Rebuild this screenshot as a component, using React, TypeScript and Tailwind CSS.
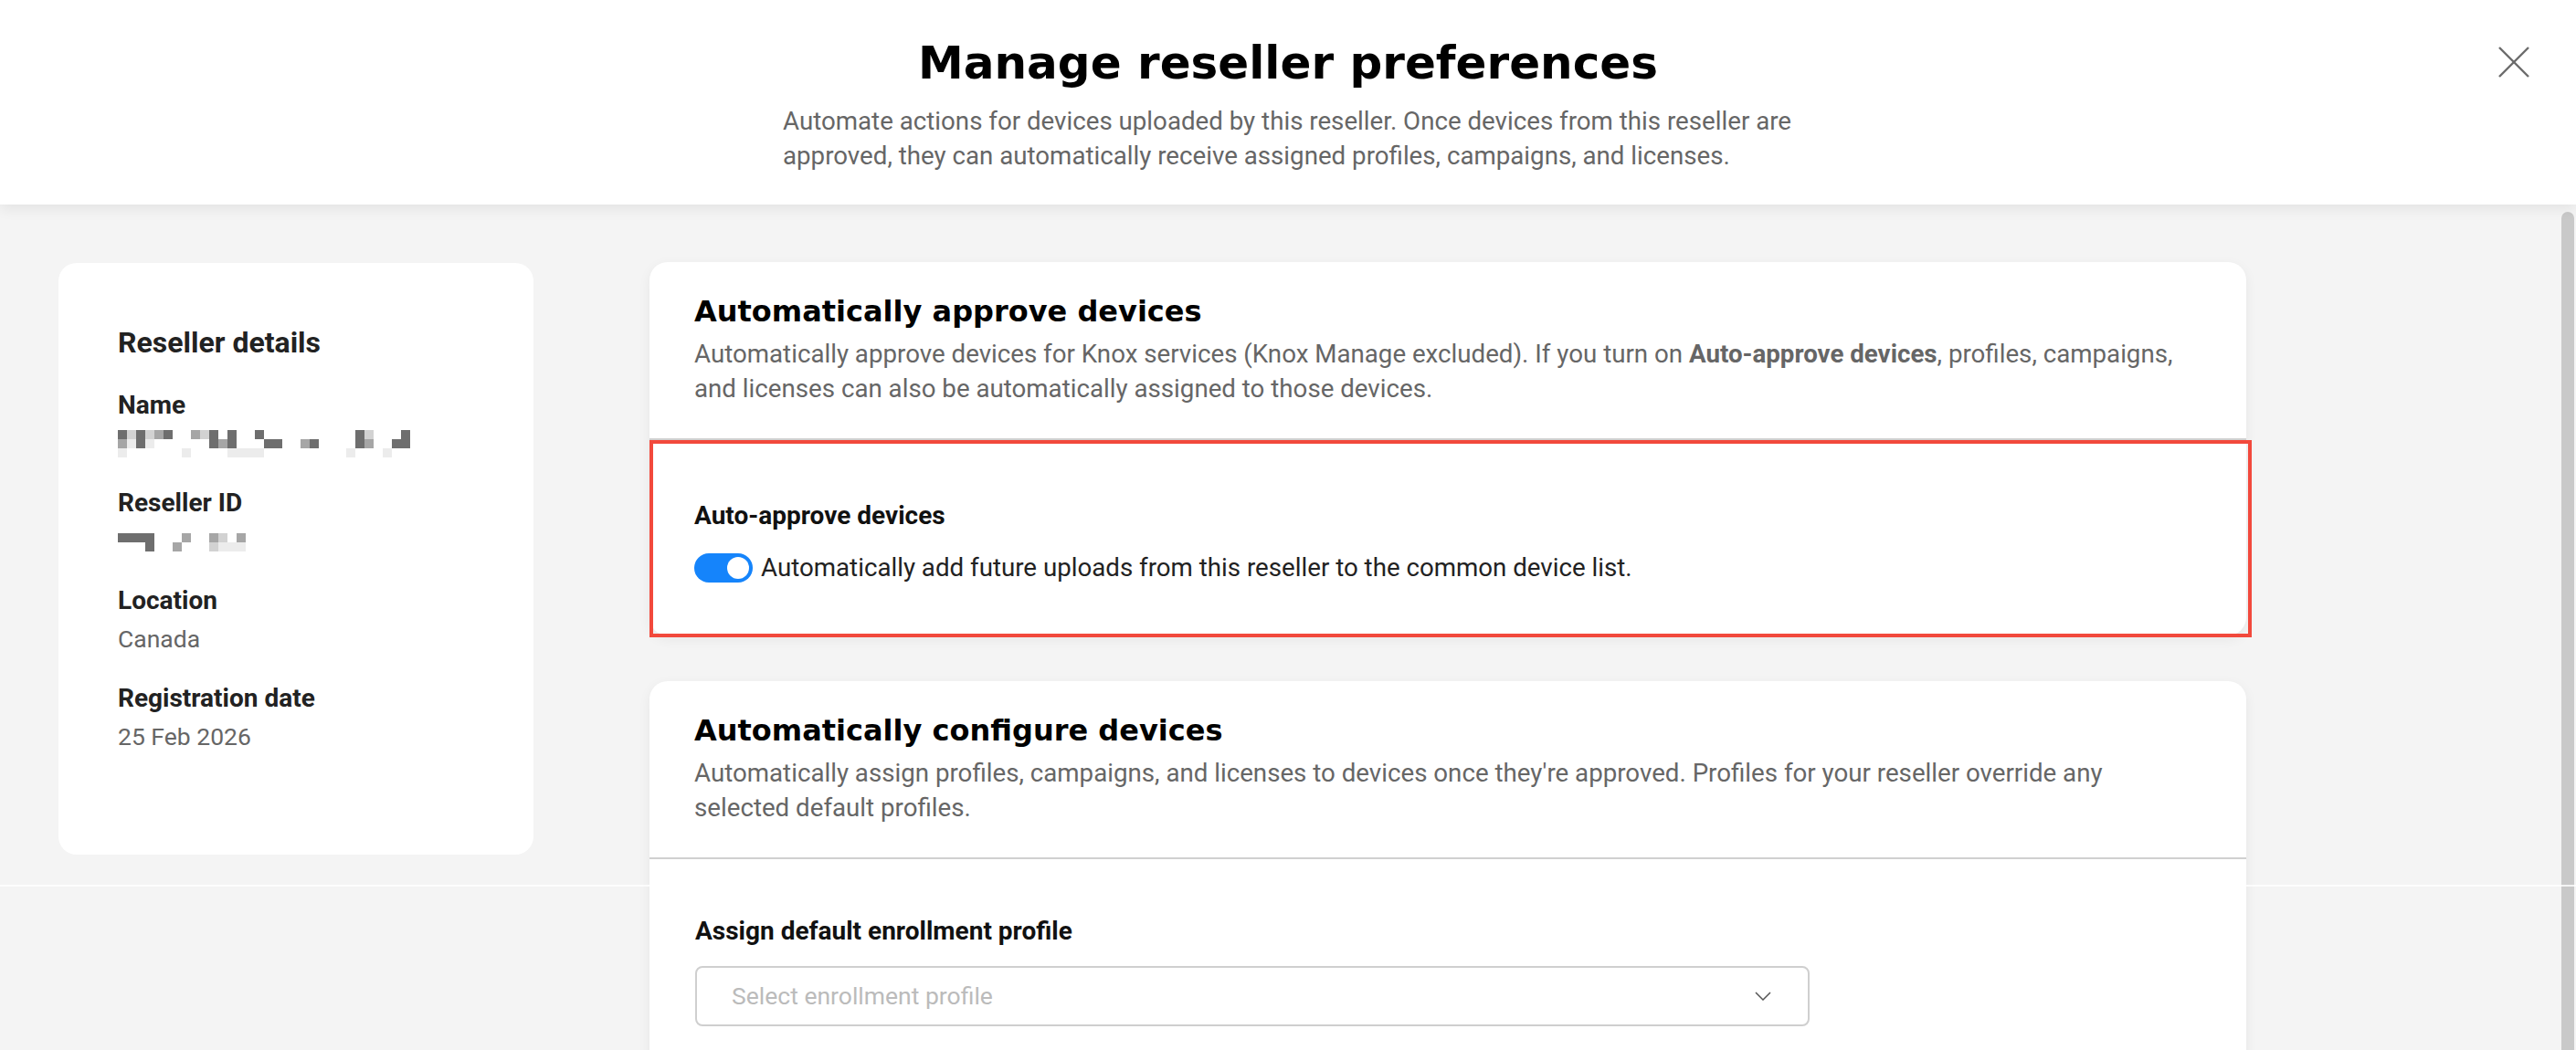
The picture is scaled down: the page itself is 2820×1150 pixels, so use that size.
import type { ReactNode } from 'react';

const NAME_MOSAIC = [
  'dldlgd..gld.d..d..........dl...d',
  'gwdw......dgd...dd..gd....dg..dd',
  'w......w....wwww.........w...w..',
];

const ID_MOSAIC = ['dddd...g..gl.g.', '...d..g...lwww.'];

const SHADES: Record<string, string> = {
  d: 'bg-[#6e6e6e]',
  g: 'bg-[#a6a6a6]',
  l: 'bg-[#d2d2d2]',
  w: 'bg-[#ececec]',
  '.': 'bg-transparent',
};

function Mosaic({ rows, className }: { rows: string[]; className?: string }) {
  return (
    <div className={`flex flex-col ${className ?? ''}`}>
      {rows.map((row, r) => (
        <div key={r} className="flex">
          {row.split('').map((c, i) => (
            <span key={i} className={`h-[10px] w-[10px] ${SHADES[c]}`} />
          ))}
        </div>
      ))}
    </div>
  );
}

function Field({ label, children }: { label: string; children: ReactNode }) {
  return (
    <div className="flex flex-col">
      <p className="text-[28px] font-bold leading-[36px] text-[#222]">{label}</p>
      <div className="mt-[4px] h-[40px] text-[26.5px] leading-[40px] text-[#666]">
        {children}
      </div>
    </div>
  );
}

function CardHeader({ title, lines }: { title: string; lines: ReactNode[] }) {
  return (
    <div className="px-[49px] pt-[34px] pb-[35px]">
      <h2 className="font-['DejaVu_Sans',sans-serif] text-[32px] font-bold leading-[40px] text-black">
        {title}
      </h2>
      <p className="mt-[8px] text-[27.7px] leading-[38px] text-[#666]">
        {lines.map((line, i) => (
          <span key={i} className="block whitespace-nowrap">
            {line}
          </span>
        ))}
      </p>
    </div>
  );
}

export default function App() {
  return (
    <div className="relative flex h-[1150px] w-[2820px] flex-col overflow-hidden bg-[#f4f4f4] font-['Roboto',sans-serif]">
      <header className="relative z-10 flex h-[224px] shrink-0 flex-col items-center bg-white pt-[39px] shadow-[0_5px_14px_rgba(0,0,0,0.07)]">
        <h1 className="font-['DejaVu_Sans',sans-serif] text-[50px] font-bold leading-[60px] text-black">
          Manage reseller preferences
        </h1>
        <p className="mt-[15px] w-[1106px] text-[27.7px] leading-[38px] text-[#666]">
          <span className="block whitespace-nowrap">
            Automate actions for devices uploaded by this reseller. Once devices from this reseller are
          </span>
          <span className="block whitespace-nowrap">
            approved, they can automatically receive assigned profiles, campaigns, and licenses.
          </span>
        </p>
        <button className="absolute right-[51px] top-[51px] h-[34px] w-[34px]" aria-label="Close">
          <svg viewBox="0 0 34 34" className="h-[34px] w-[34px]" fill="none" stroke="#6b6b6b" strokeWidth="2.4">
            <line x1="1" y1="1" x2="33" y2="33" />
            <line x1="33" y1="1" x2="1" y2="33" />
          </svg>
        </button>
      </header>

      <div className="flex flex-1">
        <main className="flex flex-1 items-start gap-[127px] pl-[64px] pt-[64px]">
          <aside className="h-[648px] w-[520px] shrink-0 rounded-[20px] bg-white pl-[65px] pt-[67px]">
            <h3 className="text-[32px] font-bold leading-[40px] text-[#222]">Reseller details</h3>
            <div className="mt-[31px] flex flex-col gap-[27px]">
              <Field label="Name">
                <Mosaic rows={NAME_MOSAIC} className="pt-[5px]" />
              </Field>
              <Field label="Reseller ID">
                <Mosaic rows={ID_MOSAIC} className="pt-[11px]" />
              </Field>
              <Field label="Location">Canada</Field>
              <Field label="Registration date">25 Feb 2026</Field>
            </div>
          </aside>

          <div className="-mt-[1px] flex w-[1748px] shrink-0 flex-col gap-[50px]">
            <section className="rounded-[20px] bg-white shadow-[0_4px_14px_rgba(0,0,0,0.06)]">
              <CardHeader
                title="Automatically approve devices"
                lines={[
                  <>
                    Automatically approve devices for Knox services (Knox Manage excluded). If you turn on{' '}
                    <b className="font-bold">Auto-approve devices</b>, profiles, campaigns,
                  </>,
                  'and licenses can also be automatically assigned to those devices.',
                ]}
              />
              <div className="relative h-[216px] border-t-2 border-[#d0d0d0] px-[49px] pt-[65px]">
                <p className="text-[28px] font-bold leading-[36px] text-[#111]">Auto-approve devices</p>
                <div className="mt-[21px] flex h-[36px] items-center gap-[9px]">
                  <span className="flex h-[32px] w-[64px] items-center justify-end rounded-full bg-[#1584fb] pr-[4px]">
                    <span className="h-[24px] w-[24px] rounded-full bg-white" />
                  </span>
                  <span className="whitespace-nowrap text-[27.7px] leading-[36px] text-[#222]">
                    Automatically add future uploads from this reseller to the common device list.
                  </span>
                </div>
                <span className="pointer-events-none absolute -bottom-[2px] left-0 -right-[6px] top-[0px] border-[4px] border-[#f2493c]" />
              </div>
            </section>

            <section className="rounded-[20px] bg-white shadow-[0_4px_14px_rgba(0,0,0,0.06)]">
              <CardHeader
                title="Automatically configure devices"
                lines={[
                  "Automatically assign profiles, campaigns, and licenses to devices once they're approved. Profiles for your reseller override any",
                  'selected default profiles.',
                ]}
              />
              <div className="h-[400px] border-t-2 border-[#d0d0d0] px-[50px] pt-[61px]">
                <p className="text-[28px] font-bold leading-[36px] text-[#111]">
                  Assign default enrollment profile
                </p>
                <div className="mt-[20px] flex h-[66px] w-[1220px] items-center justify-between rounded-[8px] border-2 border-[#cfcfcf] pl-[38px] pr-[40px]">
                  <span className="text-[26.5px] text-[#bbbbbb]">Select enrollment profile</span>
                  <svg viewBox="0 0 18 10" className="h-[10px] w-[18px]" fill="none" stroke="#555" strokeWidth="1.5">
                    <polyline points="1,1 9,9 17,1" />
                  </svg>
                </div>
              </div>
            </section>
          </div>
        </main>

        <div className="w-[16px] shrink-0 pt-[8px]">
          <div className="h-[1000px] w-[14px] rounded-full bg-[#c9c9c9]" />
        </div>
      </div>

      {/* capture seam across the page */}
      <div className="pointer-events-none absolute left-0 right-0 top-[969px] h-[2px] bg-white/80" />
    </div>
  );
}
